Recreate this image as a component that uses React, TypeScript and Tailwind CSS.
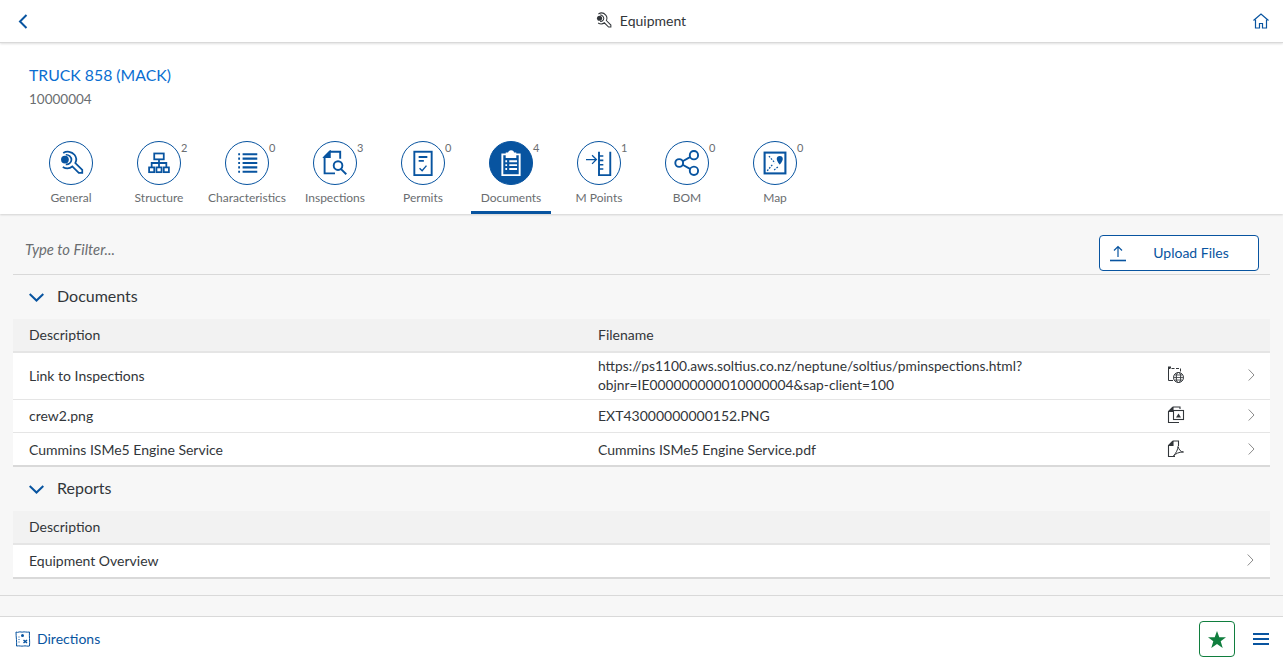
import React from 'react';

const BLUE = '#0854a0';

const GeneralIcon = () => (
  <svg width="26" height="26" viewBox="0 0 30 30" fill="none" stroke="currentColor" strokeWidth="2">
    <circle cx="8" cy="11" r="4.500" fill="currentColor" stroke="none" />
    <path d="M6 3.500a10 10 0 0 1 13 2c2.500 3 2.500 6.500 1 9.500l8 8v3.500h-4l-7.500-7.500c-3 2.500-7.500 2.500-11 .5" strokeWidth="2" />
    <path d="M9 5.500a6 6 0 0 1 6.500 6 5.500 5.500 0 0 1-6.500 5" strokeWidth="2" />
  </svg>
);
const StructureIcon = () => (
  <svg width="22" height="22" viewBox="0 0 30 30" fill="none" stroke="currentColor" strokeWidth="2.400">
    <rect x="8.500" y="2" width="13" height="8" />
    <path d="M15 10v11M5 21v-6h20v6" />
    <rect x="1.500" y="21" width="7" height="6.500" />
    <rect x="11.500" y="21" width="7" height="6.500" />
    <rect x="21.500" y="21" width="7" height="6.500" />
  </svg>
);
const ListIcon = () => (
  <svg width="22" height="22" viewBox="0 0 30 30" fill="none" stroke="currentColor" strokeWidth="2.800">
    <path d="M9 3h20M9 9h20M9 15h20M9 21h20M9 27h20" />
    <path d="M3 3h2.500M3 9h2.500M3 15h2.500M3 21h2.500M3 27h2.500" />
  </svg>
);
const InspectIcon = () => (
  <svg width="26" height="26" viewBox="0 0 30 30" fill="none" stroke="currentColor" strokeWidth="2.200">
    <path d="M21 10V2H9L3 8v19h12" />
    <path d="M3 8h6V2z" fill="currentColor" />
    <circle cx="18.500" cy="18" r="5" />
    <path d="M22 22l6 6" />
  </svg>
);
const PermitIcon = () => (
  <svg width="26" height="26" viewBox="0 0 30 30" fill="none" stroke="currentColor" strokeWidth="2.200">
    <rect x="5" y="2" width="20" height="27" />
    <path d="M10 8h10M10 12.500h6" />
    <path d="M11 21l3 3 5-6" strokeWidth="1.600" />
  </svg>
);
const ClipboardIcon = () => (
  <svg width="26" height="26" viewBox="0 0 30 30" fill="none" stroke="currentColor" strokeWidth="2.200">
    <path d="M10 5H5v24h20V5h-5" />
    <path d="M10 8V4h2.500a2.500 2.500 0 0 1 5 0H20v4z" fill="currentColor" />
    <path d="M13 13h9M13 17.500h9M13 22h9M8.500 13h2M8.500 17.500h2M8.500 22h2" />
  </svg>
);
const PointsIcon = () => (
  <svg width="26" height="26" viewBox="0 0 30 30" fill="none" stroke="currentColor" strokeWidth="2.200">
    <path d="M15 2v27h13V2" />
    <path d="M15 7h5M15 12h5M15 17h5M15 22h5" strokeWidth="1.800" />
    <path d="M0 11h11M7 6l5 5-5 5" strokeWidth="1.500" />
  </svg>
);
const ShareIcon = () => (
  <svg width="26" height="26" viewBox="0 0 30 30" fill="none" stroke="currentColor" strokeWidth="2.200">
    <circle cx="6" cy="15" r="4.500" />
    <circle cx="23" cy="6" r="4.800" />
    <circle cx="23" cy="24" r="4.800" />
    <path d="M10 13l9-5M10 17l9 5" />
  </svg>
);
const MapIcon = () => (
  <svg width="26" height="26" viewBox="0 0 30 30" fill="none" stroke="currentColor" strokeWidth="2.400">
    <rect x="3" y="3" width="24" height="24" />
    <path d="M8 7l7 8M6 24l6-7M14 23l5-4" strokeWidth="1.400" strokeDasharray="2 1.500" />
    <path d="M20.500 7a3.500 3.500 0 0 1 3.500 3.500c0 2.500-3.500 6.500-3.500 6.500s-3.500-4-3.500-6.500a3.500 3.500 0 0 1 3.500-3.500z" fill="currentColor" stroke="none" />
  </svg>
);

const tabs = [
  { label: 'General', icon: <GeneralIcon /> },
  { label: 'Structure', icon: <StructureIcon />, count: 2 },
  { label: 'Characteristics', icon: <ListIcon />, count: 0 },
  { label: 'Inspections', icon: <InspectIcon />, count: 3 },
  { label: 'Permits', icon: <PermitIcon />, count: 0 },
  { label: 'Documents', icon: <ClipboardIcon />, count: 4, active: true },
  { label: 'M Points', icon: <PointsIcon />, count: 1 },
  { label: 'BOM', icon: <ShareIcon />, count: 0 },
  { label: 'Map', icon: <MapIcon />, count: 0 },
];

const WebDoc = () => (
  <svg width="18" height="18" viewBox="0 0 18 18" fill="none" stroke="#32363a" strokeWidth="1">
    <path d="M1.500 2v12.500H6M1 2.500h2M4.500 2.500h3M9 2.500h3M13.500 2.500v3" />
    <path d="M1 1.500h3" strokeWidth="2" />
    <circle cx="11.500" cy="11.500" r="5" />
    <ellipse cx="11.500" cy="11.500" rx="2.200" ry="5" />
    <path d="M6.500 11.500h10M7.500 9h8M7.500 14h8" strokeWidth="0.800" />
  </svg>
);
const ImageDoc = () => (
  <svg width="18" height="18" viewBox="0 0 18 18" fill="none" stroke="#32363a" strokeWidth="1.100">
    <path d="M6 1h7v2M6 1L1.500 5.500V16.500H12" />
    <path d="M1.500 5.500H6V1" fill="#32363a" />
    <rect x="6.500" y="4.500" width="10" height="9" />
    <path d="M9 11.500l2.500-4 2.500 4z" fill="#32363a" stroke="none" />
  </svg>
);
const PdfDoc = () => (
  <svg width="18" height="18" viewBox="0 0 18 18" fill="none" stroke="#32363a" strokeWidth="1.100">
    <path d="M6 1h5.500v5M6 1L1.500 5.500V16.500H8" />
    <path d="M1.500 5.500H6V1" fill="#32363a" />
    <path d="M11 6.500c0 3-2 6.500-4.500 9.500 2.500-2.500 5-4 10-4-3 0-4.500-2.500-5.500-5.500" strokeWidth="1" />
  </svg>
);

const RowChevron = () => (
  <svg width="7" height="12" viewBox="0 0 7 12" fill="none" stroke="#8c8c8c" strokeWidth="1">
    <path d="M.700 .500L6 6 .700 11.500" />
  </svg>
);

const SectionTitle = ({ title, h }: { title: string; h: string }) => (
  <div className={`flex items-center gap-[13px] pl-4 ${h}`}>
    <svg width="15" height="9" viewBox="0 0 15 9" fill="none" stroke={BLUE} strokeWidth="2">
      <path d="M.700 1l6.800 6.500L14.300 1" />
    </svg>
    <span className="text-[16px] leading-[20px] pb-[2px] text-[#32363a]">{title}</span>
  </div>
);

const docs = [
  {
    desc: 'Link to Inspections',
    file: (
      <span className="text-[13.8px]">
        https://ps1100.aws.soltius.co.nz/neptune/soltius/pminspections.html?
        <br />
        objnr=IE000000000010000004&sap-client=100
      </span>
    ),
    icon: <WebDoc />,
    h: 'h-[47px] pb-[2px]',
  },
  { desc: 'crew2.png', file: 'EXT43000000000152.PNG', icon: <ImageDoc />, h: 'h-[33px] pb-[2px]' },
  { desc: 'Cummins ISMe5 Engine Service', file: 'Cummins ISMe5 Engine Service.pdf', icon: <PdfDoc />, h: 'h-[32px]' },
];

export default function App() {
  return (
    <div className="h-[661px] w-[1283px] overflow-hidden flex flex-col bg-[#f7f7f7]" style={{ fontFamily: 'Lato, sans-serif' }}>
      {/* top bar */}
      <header className="h-[43px] shrink-0 bg-white border-b border-[#d9d9d9] shadow-[0_1px_2px_rgba(0,0,0,0.12)] relative z-10 flex items-center justify-between pl-[18px] pr-[14px]">
        <svg width="10" height="15" viewBox="0 0 10 15" fill="none" stroke={BLUE} strokeWidth="2">
          <path d="M8.500 1L2 7.500 8.500 14" />
        </svg>
        <div className="flex items-center gap-2 text-[#32363a] text-[14px] pb-[1px]">
          <svg width="17" height="17" viewBox="0 0 30 30" fill="none" stroke="#32363a" strokeWidth="1.800">
            <circle cx="8" cy="11" r="4.500" fill="#32363a" stroke="none" />
            <path d="M6 3.500a10 10 0 0 1 13 2c2.500 3 2.500 6.500 1 9.500l8 8v3.500h-4l-7.500-7.500c-3 2.500-7.500 2.500-11 .5" />
            <path d="M9 5.500a6 6 0 0 1 6.500 6 5.500 5.500 0 0 1-6.500 5" />
          </svg>
          <span>Equipment</span>
        </div>
        <svg width="16" height="16" viewBox="0 0 16 16" fill="none" stroke={BLUE} strokeWidth="1.200">
          <path d="M0.500 7.500L8 1l7.500 6.500" />
          <path d="M2.500 6.500v8.500h4v-4.500h3V15h4V6.500" />
        </svg>
      </header>

      {/* object header + tabs */}
      <section className="h-[171px] shrink-0 bg-white shadow-[0_1px_2px_rgba(0,0,0,0.15)] relative flex flex-col">
        <div className="pl-[29px] pt-[21px]">
          <h1 className="text-[15.8px] leading-[22px] text-[#0a6ed1]">TRUCK 858 (MACK)</h1>
          <p className="text-[13.5px] leading-[20px] mt-[3px] text-[#6a6d70]">10000004</p>
        </div>
        <nav className="flex gap-2 pl-[31px] mt-[32px]">
          {tabs.map((t) => (
            <div key={t.label} className={`w-20 h-[73px] flex flex-col items-center relative ${t.active ? 'border-b-[3px] border-[#0854a0]' : ''}`}>
              <div className={`w-11 h-11 rounded-full border border-[#0854a0] flex items-center justify-center ${t.active ? 'bg-[#0854a0] text-white' : 'bg-white text-[#0854a0]'}`}>
                {t.icon}
              </div>
              {t.count !== undefined && (
                <span className="absolute left-[62px] top-0 text-[11px] leading-[14px] text-[#6a6d70]">{t.count}</span>
              )}
              <span className="text-[12px] leading-[16px] mt-[5px] text-[#6a6d70] whitespace-nowrap">{t.label}</span>
            </div>
          ))}
        </nav>
      </section>

      {/* content */}
      <main className="flex-1 px-[13px]">
        <div className="h-[61px] flex items-center justify-between border-b border-[#d9d9d9] pl-3 pr-[11px] pt-[10px]">
          <span className="text-[14.8px] italic text-[#6a6d70]">Type to Filter...</span>
          <button className="w-40 h-9 mt-[7px] bg-white border border-[#0854a0] rounded flex items-center text-[14px] text-[#0854a0] pl-[9px]">
            <svg width="18" height="18" viewBox="0 0 18 18" fill="none" stroke={BLUE} strokeWidth="1.200">
              <path d="M9 13V2.500M5 6.500l4-4 4 4" />
              <path d="M1 16.500h16" strokeWidth="1.600" />
            </svg>
            <span className="flex-1 text-center pr-[3px] pb-[1px]">Upload Files</span>
          </button>
        </div>

        <SectionTitle title="Documents" h="h-11" />
        <div className="h-[34px] bg-[#f2f2f2] border-b-2 border-[#e5e5e5] grid grid-cols-[569px_1fr] items-center pl-4 pb-[2px] text-[14px] text-[#32363a]">
          <div>Description</div>
          <div>Filename</div>
        </div>
        <div className="bg-white border-b-2 border-[#d9d9d9]">
          {docs.map((d, i) => (
            <div key={d.desc} className={`${d.h} grid grid-cols-[569px_569px_81px_1fr] items-center pl-4 text-[14px] leading-[19px] text-[#32363a] ${i < docs.length - 1 ? 'border-b border-[#e5e5e5]' : ''}`}>
              <div>{d.desc}</div>
              <div className="whitespace-nowrap">{d.file}</div>
              <div>{d.icon}</div>
              <RowChevron />
            </div>
          ))}
        </div>

        <SectionTitle title="Reports" h="h-11" />
        <div className="h-[34px] bg-[#f2f2f2] border-b-2 border-[#e5e5e5] flex items-center pl-4 pb-[2px] text-[14px] text-[#32363a]">
          <div>Description</div>
        </div>
        <div className="h-[34px] bg-white border-b-2 border-[#d9d9d9] flex items-center justify-between pl-4 pr-[16px] pb-[2px] text-[14px] text-[#32363a]">
          <span>Equipment Overview</span>
          <RowChevron />
        </div>
      </main>

      {/* footer */}
      <div className="h-[21px] shrink-0 border-t border-[#d9d9d9]" />
      <footer className="h-[45px] shrink-0 bg-white border-t border-[#d9d9d9] flex items-center justify-between pl-[15px] pr-[14px]">
        <div className="flex items-center gap-[6px] text-[14px] text-[#0854a0]">
          <svg width="16" height="16" viewBox="0 0 16 16" fill="none" stroke={BLUE} strokeWidth="1">
            <path d="M1 1c1 .5 2 .5 3 0s3 .5 4 0 4 .5 6.500 0c-.5 4 .5 9 0 14-2 .5-4-.5-6 0s-4-.5-7 0c.5-4-.5-9-.5-14z" />
            <circle cx="7.500" cy="4.500" r="1.500" fill={BLUE} stroke="none" />
            <path d="M3.500 6h2M3.500 8.500h2M3.500 11h2" strokeDasharray="1 1" />
            <path d="M8.500 9l3.500 3M12 9l-3.500 3" strokeWidth="1.500" />
          </svg>
          <span className="pb-[1px]">Directions</span>
        </div>
        <div className="flex items-center gap-[18px]">
          <button className="w-9 h-9 rounded border border-[#107e3e] bg-white flex items-center justify-center">
            <svg width="18" height="17" viewBox="0 0 18 17" fill="#107e3e">
              <path d="M9 0l2.300 6.200H18l-5.300 4.100 2 6.700L9 13l-5.700 4 2-6.700L0 6.200h6.700z" />
            </svg>
          </button>
          <div className="w-4 flex flex-col gap-[3px]">
            <div className="h-0.5 bg-[#0854a0]" />
            <div className="h-0.5 bg-[#0854a0]" />
            <div className="h-0.5 bg-[#0854a0]" />
          </div>
        </div>
      </footer>
    </div>
  );
}
